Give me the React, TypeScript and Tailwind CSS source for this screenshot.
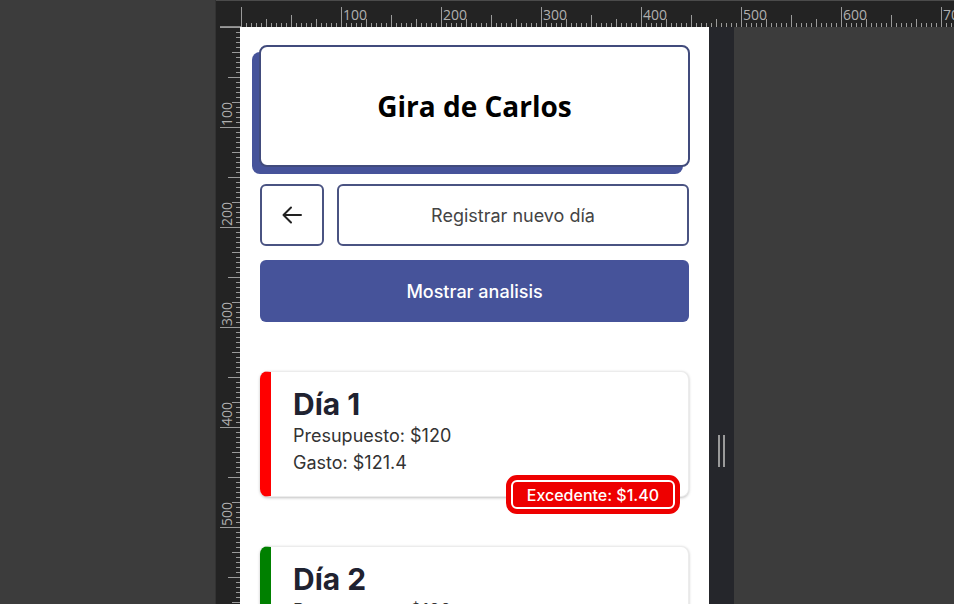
import { ReactNode } from 'react';

const hTicks = Array.from({ length: 145 }, (_, i) => i * 5);
const vTicks = Array.from({ length: 116 }, (_, i) => i * 5);

function tickLen(v: number) {
  if (v % 100 === 0) return 20;
  if (v % 50 === 0) return 12;
  if (v % 25 === 0) return 8;
  return 4;
}

function TopRuler() {
  return (
    <svg width={738} height={27} className="block shrink-0">
      <rect width={738} height={27} fill="#232323" />
      <line x1={0} y1={0.5} x2={738} y2={0.5} stroke="#4b4b4b" />
      <line x1={4} y1={26.5} x2={25} y2={26.5} stroke="#8a8a8a" />
      {hTicks.map(v => (
        <line key={v} x1={25.5 + v} y1={27} x2={25.5 + v} y2={27 - tickLen(v)} stroke="#9a9a9a" />
      ))}
      {hTicks.filter(v => v > 0 && v % 100 === 0).map(v => (
        <text key={v} x={27 + v} y={20} fill="#b0b0b0" fontSize={14} fontFamily="'Open Sans', sans-serif">
          {v}
        </text>
      ))}
    </svg>
  );
}

function LeftRuler() {
  return (
    <svg width={24} height={577} className="block shrink-0">
      <rect width={24} height={577} fill="#232323" />
      {vTicks.map(v => (
        <line key={v} x1={24} y1={v + 0.5} x2={24 - tickLen(v)} y2={v + 0.5} stroke="#9a9a9a" />
      ))}
      {vTicks.filter(v => v > 0 && v % 100 === 0).map(v => (
        <text
          key={v}
          x={0}
          y={0}
          transform={`translate(16 ${v - 1}) rotate(-90)`}
          fill="#b0b0b0"
          fontSize={14}
          fontFamily="'Open Sans', sans-serif"
        >
          {v}
        </text>
      ))}
    </svg>
  );
}

function DayCard({ title, budget, spent, accent, badge }: {
  title: string;
  budget: string;
  spent: string;
  accent: string;
  badge?: ReactNode;
}) {
  return (
    <div className={`relative shrink-0 rounded-lg border border-[#ececec] border-l-[11px] ${accent} bg-white pb-5 pl-[22px] pt-[14px] shadow-[0_1px_3px_rgba(0,0,0,0.25)]`}>
      <h3 className="text-[30px] font-bold leading-[36px] text-[#1f2230]">{title}</h3>
      <p className="text-[18px] leading-[27px] text-[#333]">Presupuesto: {budget}</p>
      <p className="text-[18px] leading-[27px] text-[#333]">Gasto: {spent}</p>
      {badge}
    </div>
  );
}

export default function App() {
  return (
    <div className="flex h-[604px] w-[954px] overflow-hidden bg-[#3c3c3c] font-['Inter',sans-serif]">
      <div className="w-[216px] shrink-0 border-r border-[#333]" />
      <div className="flex min-w-0 flex-1 flex-col">
        <TopRuler />
        <div className="flex min-h-0 flex-1">
          <LeftRuler />
          <div className="flex w-[469px] shrink-0 flex-col overflow-hidden bg-white px-5 pt-[18px]">
            {/* Title */}
            <div className="mx-[-1px] flex h-[122px] shrink-0 items-center justify-center rounded-lg border-2 border-[#414b7c] bg-white shadow-[-7px_7px_0_#46539a]">
              <h1 className="font-['Open_Sans',sans-serif] text-[28px] font-bold text-black">Gira de Carlos</h1>
            </div>

            {/* Actions */}
            <div className="mt-[17px] flex shrink-0 gap-[13px]">
              <button className="flex h-[62px] w-[64px] items-center justify-center rounded-md border-2 border-[#4a5382] bg-white">
                <svg width="20" height="18" viewBox="0 0 20 18" fill="none" stroke="#222" strokeWidth="2" strokeLinecap="round" strokeLinejoin="round">
                  <path d="M19 9H1.5M9 1.5L1.5 9L9 16.5" />
                </svg>
              </button>
              <button className="h-[62px] flex-1 rounded-md border-2 border-[#4a5382] bg-white text-[18px] text-[#444]">
                Registrar nuevo día
              </button>
            </div>
            <button className="mt-[14px] h-[62px] shrink-0 rounded-md bg-[#46539a] text-[18px] font-medium text-white">
              Mostrar analisis
            </button>

            {/* Days */}
            <div className="mt-[49px] flex flex-col gap-[49px]">
              <DayCard
                title="Día 1"
                budget="$120"
                spent="$121.4"
                accent="border-l-[#ff0000]"
                badge={
                  <span className="absolute -bottom-[13px] right-[13px] flex h-[29px] items-center rounded-md border-2 border-white bg-[#ee0000] px-[14px] text-[16px] font-medium text-white ring-[5px] ring-[#ee0000]">
                    Excedente: $1.40
                  </span>
                }
              />
              <DayCard title="Día 2" budget="$120" spent="$98.5" accent="border-l-[#008000]" />
            </div>
          </div>
          <div className="flex w-[25px] shrink-0 justify-center gap-[3px] bg-[#25262b] pt-[408px]">
            <div className="h-[32px] w-[2px] bg-[#9a9a9a]" />
            <div className="h-[32px] w-[2px] bg-[#9a9a9a]" />
          </div>
          <div className="flex-1" />
        </div>
      </div>
    </div>
  );
}
